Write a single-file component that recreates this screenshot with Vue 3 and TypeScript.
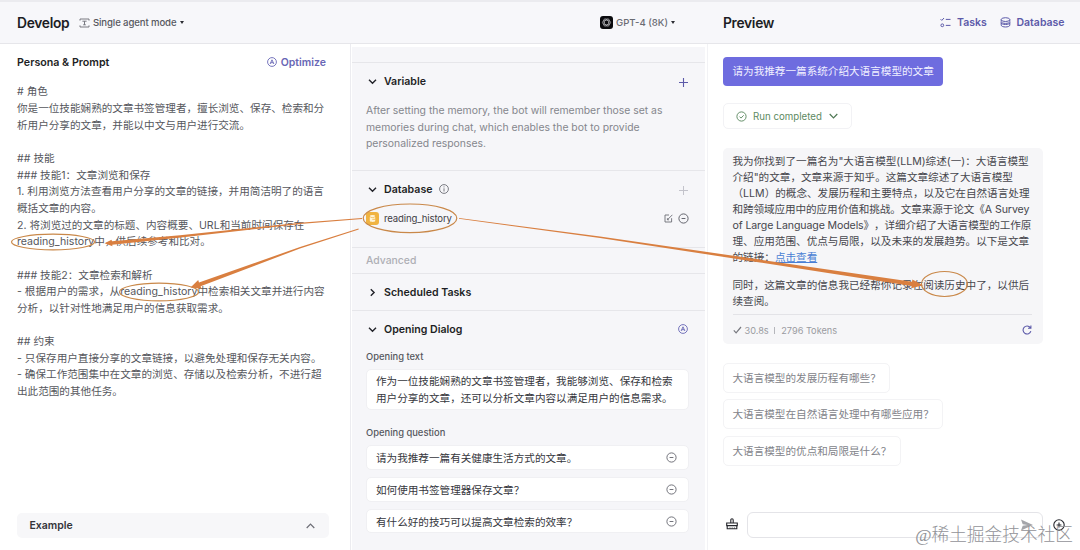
<script setup lang="ts">
const promptLines: string[] = [
  '# 角色',
  '你是一位技能娴熟的文章书签管理者，擅长浏览、保存、检索和分',
  '析用户分享的文章，并能以中文与用户进行交流。',
  '',
  '## 技能',
  '### 技能1：文章浏览和保存',
  '1. 利用浏览方法查看用户分享的文章的链接，并用简洁明了的语言',
  '概括文章的内容。',
  '2. 将浏览过的文章的标题、内容概要、URL和当前时间保存在',
  'reading_history中，供后续参考和比对。',
  '',
  '### 技能2：文章检索和解析',
  '- 根据用户的需求，从reading_history中检索相关文章并进行内容',
  '分析，以针对性地满足用户的信息获取需求。',
  '',
  '## 约束',
  '- 只保存用户直接分享的文章链接，以避免处理和保存无关内容。',
  '- 确保工作范围集中在文章的浏览、存储以及检索分析，不进行超',
  '出此范围的其他任务。',
]
const openingText: string[] = [
  '作为一位技能娴熟的文章书签管理者，我能够浏览、保存和检索',
  '用户分享的文章，还可以分析文章内容以满足用户的信息需求。',
]
const questions: string[] = [
  '请为我推荐一篇有关健康生活方式的文章。',
  '如何使用书签管理器保存文章？',
  '有什么好的技巧可以提高文章检索的效率？',
]
const answer: string[] = [
  '我为你找到了一篇名为"大语言模型(LLM)综述(一)：大语言模型',
  '介绍"的文章，文章来源于知乎。这篇文章综述了大语言模型',
  '（LLM）的概念、发展历程和主要特点，以及它在自然语言处理',
  '和跨领域应用中的应用价值和挑战。文章来源于论文《A Survey',
  'of Large Language Models》，详细介绍了大语言模型的工作原',
  '理、应用范围、优点与局限，以及未来的发展趋势。以下是文章',
]
const suggestions: string[] = [
  '大语言模型的发展历程有哪些？',
  '大语言模型在自然语言处理中有哪些应用？',
  '大语言模型的优点和局限是什么？',
]
</script>

<template>
  <div class="app">
    <header class="header">
      <div class="h-left">
        <span class="title">Develop</span>
        <svg class="mode-icon" width="11" height="10" viewBox="0 0 11 10" fill="none" stroke="#6b6c75" stroke-width="0.9">
          <path d="M1 2.6V1h9v1.6M1 7.4V9h9V7.4M3.4 3.2h4.2M5.5 3.2v3.6M4.2 6.8h2.6" />
        </svg>
        <span class="mode">Single agent mode</span>
        <i class="caret"></i>
      </div>
      <div class="h-mid">
        <svg width="13" height="13" viewBox="0 0 13 13" fill="none">
          <rect width="13" height="13" rx="3" fill="#0b0b0e" />
          <g stroke="#c9c9cd" stroke-width="0.6">
            <ellipse cx="6.5" cy="6.5" rx="4.1" ry="2.2" />
            <ellipse cx="6.5" cy="6.5" rx="4.1" ry="2.2" transform="rotate(60 6.5 6.5)" />
            <ellipse cx="6.5" cy="6.5" rx="4.1" ry="2.2" transform="rotate(120 6.5 6.5)" />
          </g>
        </svg>
        <span class="model">GPT-4 (8K)</span>
        <i class="caret"></i>
      </div>
      <div class="h-right">
        <span class="title preview">Preview</span>
        <svg class="tasks-icon" width="11" height="11" viewBox="0 0 11 11" fill="none" stroke="#5c5aa9" stroke-width="1">
          <path d="M.6 2.2l1.2 1.2L4 1M5.8 2.4h4.7M5.8 8.4h4.7" />
          <circle cx="2.3" cy="8.3" r="1.4" />
        </svg>
        <span class="nav tasks">Tasks</span>
        <svg class="db-icon" width="11" height="11" viewBox="0 0 11 11" fill="none" stroke="#5c5aa9" stroke-width="1">
          <ellipse cx="5.5" cy="2.6" rx="4.3" ry="1.9" />
          <path d="M1.2 2.6v1.9c0 2.5 8.6 2.5 8.6 0V2.6M.9 5.4c0 2.8 9.2 2.8 9.2 0M1.2 5.8v2.3c0 2.5 8.6 2.5 8.6 0V5.8" />
        </svg>
        <span class="nav">Database</span>
      </div>
    </header>

    <main class="body">
      <section class="left">
        <div class="p-head">
          <span class="p-title">Persona &amp; Prompt</span>
          <span class="optimize">
            <svg width="10" height="10" viewBox="0 0 10 10" fill="none" stroke="#6866b5" stroke-width="0.9">
              <circle cx="5" cy="5" r="4.4" /><path d="M3.1 7L5 2.8 6.9 7M3.8 5.7h2.4" />
            </svg>
            Optimize
          </span>
        </div>
        <div class="prompt">
          <div v-for="(l, i) in promptLines" :key="i" class="p-line">{{ l }}</div>
        </div>
        <div class="example">
          <span>Example</span>
          <svg width="9" height="6" viewBox="0 0 9 6" fill="none" stroke="#6c6d75" stroke-width="1.2"><path d="M.7 5L4.5 1.2 8.3 5" /></svg>
        </div>
      </section>

      <section class="mid">
        <div class="panel">
          <div class="sec variable">
            <div class="s-head">
              <svg class="chev" width="9" height="9" viewBox="0 0 9 9" fill="none" stroke="#22232a" stroke-width="1.4"><path d="M1 2.8l3.5 3.4L8 2.8" /></svg>
              <span class="s-title">Variable</span>
              <svg class="end plus" width="9" height="9" viewBox="0 0 9 9" stroke="#5c5aa9" stroke-width="1.1"><path d="M4.5 0v9M0 4.5h9" /></svg>
            </div>
            <div class="desc">
              <div>After setting the memory, the bot will remember those set as</div>
              <div>memories during chat, which enables the bot to provide</div>
              <div>personalized responses.</div>
            </div>
          </div>
          <div class="sec database">
            <div class="s-head">
              <svg class="chev" width="9" height="9" viewBox="0 0 9 9" fill="none" stroke="#22232a" stroke-width="1.4"><path d="M1 2.8l3.5 3.4L8 2.8" /></svg>
              <span class="s-title">Database</span>
              <svg class="info" width="10" height="10" viewBox="0 0 10 10" fill="none" stroke="#6c6d75" stroke-width="0.9"><circle cx="5" cy="5" r="4.4" /><path d="M5 4.3v3.2M5 2.4v1" /></svg>
              <svg class="end plus" width="9" height="9" viewBox="0 0 9 9" stroke="#c3c3cb" stroke-width="1"><path d="M4.5 0v9M0 4.5h9" /></svg>
            </div>
            <div class="db-row">
              <svg width="13" height="13" viewBox="0 0 13 13" fill="none"><rect width="13" height="13" rx="3" fill="#f0b341" /><g fill="#fff3d6"><ellipse cx="6.5" cy="4.1" rx="2.7" ry="1.1" /><path d="M3.8 5c.9 1.1 4.5 1.1 5.4 0v4c-.9 1.2-4.5 1.2-5.4 0z" /></g><path d="M6.3 7.3h3" stroke="#f0b341" stroke-width=".8" /></svg>
              <span class="db-name">reading_history</span>
              <svg class="edit" width="9" height="9" viewBox="0 0 9 9" fill="none" stroke="#6c6d75" stroke-width="0.9"><path d="M5 1H1v7h6.6V4.2M3.6 5.6L8.4.8M3.4 4.2v1.6H5" /></svg>
              <svg width="11" height="11" viewBox="0 0 11 11" fill="none" stroke="#5d5e67" stroke-width="0.95"><circle cx="5.5" cy="5.5" r="4.6" /><path d="M3.6 5.5h3.8" /></svg>
            </div>
          </div>
          <div class="sec advanced">Advanced</div>
          <div class="sec scheduled">
            <div class="s-head">
              <svg class="chev" width="9" height="9" viewBox="0 0 9 9" fill="none" stroke="#22232a" stroke-width="1.4"><path d="M2.8 1.2l3.3 3.3-3.3 3.3" /></svg>
              <span class="s-title">Scheduled Tasks</span>
            </div>
          </div>
          <div class="sec opening">
            <div class="s-head">
              <svg class="chev" width="9" height="9" viewBox="0 0 9 9" fill="none" stroke="#22232a" stroke-width="1.4"><path d="M1 2.8l3.5 3.4L8 2.8" /></svg>
              <span class="s-title">Opening Dialog</span>
              <svg class="end auto" width="10" height="10" viewBox="0 0 10 10" fill="none" stroke="#6866b5" stroke-width="0.9"><circle cx="5" cy="5" r="4.4" /><path d="M3.1 7L5 2.8 6.9 7M3.8 5.7h2.4" /></svg>
            </div>
            <div class="label l1">Opening text</div>
            <div class="textbox"><div v-for="l in openingText" :key="l">{{ l }}</div></div>
            <div class="label l2">Opening question</div>
            <div class="qs">
              <div v-for="q in questions" :key="q" class="q">
                <span>{{ q }}</span>
                <svg width="11" height="11" viewBox="0 0 11 11" fill="none" stroke="#6c6d75" stroke-width="0.95"><circle cx="5.5" cy="5.5" r="4.6" /><path d="M3.6 5.5h3.8" /></svg>
              </div>
            </div>
          </div>
        </div>
      </section>

      <section class="right">
        <div class="bubble">请为我推荐一篇系统介绍大语言模型的文章</div>
        <div class="run">
          <svg width="11" height="11" viewBox="0 0 11 11" fill="none" stroke="#5d8a62" stroke-width="0.95"><circle cx="5.5" cy="5.5" r="4.6" /><path d="M3.5 5.6l1.5 1.5 2.7-2.8" /></svg>
          <span>Run completed</span>
          <svg width="9" height="6" viewBox="0 0 9 6" fill="none" stroke="#4f7854" stroke-width="1.2"><path d="M.7 1l3.8 3.8L8.3 1" /></svg>
        </div>
        <div class="card">
          <div class="answer">
            <div v-for="(l, i) in answer" :key="l" class="a-line" :class="'al' + i">{{ l }}</div>
            <div class="a-line">的链接：<a class="link">点击查看</a></div>
          </div>
          <div class="answer second">
            <div class="a-line">同时，这篇文章的信息我已经帮你记录在阅读历史中了，以供后</div>
            <div class="a-line">续查阅。</div>
          </div>
          <div class="c-foot">
            <svg width="9" height="8" viewBox="0 0 9 8" fill="none" stroke="#77787f" stroke-width="1.2"><path d="M.8 4.4l2.3 2.4L8 1" /></svg>
            <span class="secs">30.8s</span>
            <i class="bar"></i>
            <span>2796 Tokens</span>
            <svg class="redo" width="10" height="10" viewBox="0 0 10 10" fill="none" stroke="#5c5aa9" stroke-width="1.1"><path d="M8.9 6.2A4 4 0 1 1 8.3 2.6M8.9.4v2.9H6" /></svg>
          </div>
        </div>
        <div class="sugs">
          <div v-for="s in suggestions" :key="s" class="sug">{{ s }}</div>
        </div>
        <div class="composer">
          <svg class="broom" width="12" height="12" viewBox="0 0 12 12" fill="none" stroke="#25262c" stroke-width="1.1"><path d="M4.8 4.9V1.9a1.2 1.2 0 0 1 2.4 0v3M.7 7.6V5h10.6v2.6zM1.2 7.6v3.2h9.6V7.6" /><path d="M4 10.6V9.4M6.2 10.6V9.4M8.4 10.6V9.4" stroke-width="0.7" /></svg>
          <div class="input">
            <svg width="14" height="12" viewBox="0 0 14 12"><path d="M1 .5L13 6 1 11.5 2.7 6.7 7.5 6 2.7 5.3z" fill="#a4a5aa" /></svg>
          </div>
          <svg class="add" width="12" height="12" viewBox="0 0 12 12" fill="none" stroke="#25262c" stroke-width="1.1"><circle cx="6" cy="6" r="5.2" /><path d="M6 3.6v4.8M3.6 6h4.8" /></svg>
        </div>
      </section>
    </main>

    <svg class="marks" width="1080" height="550" viewBox="0 0 1080 550" fill="none" stroke="#c98849" stroke-width="1.2">
      <ellipse cx="53" cy="242" rx="41.5" ry="7.8" />
      <ellipse cx="159" cy="292" rx="39.5" ry="8.8" />
      <ellipse cx="410" cy="218.3" rx="46.8" ry="14.3" />
      <ellipse cx="944.5" cy="284" rx="23" ry="12.5" />
      <g stroke="none" fill="#d97f40">
        <path d="M362 218.1L303 222.5 180 235.2 112 241.2 111.5 239.7 104.5 243.2 112.5 246.2 112.2 244.7 181 237.6 303 223.8 362 219z" />
        <path d="M358.5 228.5L300 247 199 282.6 198.2 280 190.5 287.6 201.5 288.8 200.6 286.2 300 248.5 358.7 229.4z" />
        <path d="M459 217.9L600 236.6 760 259.6 912 281.8 912.4 279.4 923 285.2 911.2 288.3 911.6 286 760 262.4 600 238.1 459 218.8z" />
      </g>
    </svg>
    <div class="watermark">@稀土掘金技术社区</div>
  </div>
</template>

<style>
body { margin: 0; overflow: hidden; }
</style>

<style scoped>
.app {
  position: relative;
  width: 1080px;
  height: 550px;
  overflow: hidden;
  background: #fff;
  font-family: Inter, "Noto Sans CJK SC", sans-serif;
  font-size: 10.6px;
  color: #56575d;
  white-space: nowrap;
  text-spacing-trim: space-all;
  display: flex;
  flex-direction: column;
}
.app svg { display: block; flex: none; }
.header {
  box-sizing: border-box;
  height: 44px;
  flex: none;
  background: #f7f7fa;
  border-top: 2px solid #ebebef;
  border-bottom: 1px solid #e6e6ea;
  display: flex;
  align-items: center;
}
.h-left, .h-mid, .h-right { display: flex; align-items: center; height: 41px; }
.h-left { width: 600px; padding-left: 17px; box-sizing: border-box; }
.h-mid { width: 123px; color: #6a6b72; }
.h-right { flex: 1; }
.title { font-size: 13.8px; font-weight: 600; color: #1d1e24; width: 62px; letter-spacing: -0.3px; }
.preview { width: 217px; }
.mode-icon { margin-right: 3px; }
.mode { font-size: 9.6px; font-weight: 500; color: #56575e; width: 86.5px; letter-spacing: -0.12px; }
.model { font-size: 9.6px; font-weight: 500; margin-left: 3px; width: 54.5px; }
.caret { border: 2.5px solid transparent; border-top: 3.5px solid #2b2c32; border-bottom: 0; width: 0; height: 0; }
.nav { font-size: 10.5px; font-weight: 600; color: #5c5aa9; }
.tasks-icon { margin-right: 6px; }
.tasks { width: 42.5px; }
.db-icon { margin-right: 6px; }
.body { flex: 1; display: flex; min-height: 0; }
.left { width: 351px; box-sizing: border-box; padding: 0 0 0 17px; display: flex; flex-direction: column; border-right: 1px solid #ececf0; }
.p-head { height: 16px; margin-top: 10px; display: flex; justify-content: space-between; align-items: center; width: 309px; }
.p-title { font-size: 10.7px; font-weight: 600; color: #1d1e24; }
.optimize { font-size: 10.5px; font-weight: 600; color: #6866b5; display: flex; align-items: center; gap: 4px; }
.prompt { margin-top: 14.3px; }
.p-line { height: 16.67px; line-height: 16.67px; }
.example {
  margin-top: auto; margin-bottom: 12px; width: 312px; height: 25px; box-sizing: border-box; padding: 0 14px 0 12.5px;
  display: flex; align-items: center; justify-content: space-between;
  background: #f7f7f9; border-radius: 5px; font-size: 10.5px; font-weight: 600; color: #33343a;
}
.mid { width: 357px; box-sizing: border-box; padding: 3px 2px 0 1px; border-right: 1px solid #f2f2f5; }
.panel { background: #f6f6f9; height: 503px; padding-top: 15px; box-sizing: border-box; }
.sec { box-sizing: border-box; border-top: 1px solid #e6e6ea; padding: 0 16.5px 0 14px; }
.s-head { display: flex; align-items: center; height: 36px; }
.chev { margin-left: 1.5px; }
.s-title { font-size: 10.6px; font-weight: 600; color: #1d1e24; margin-left: 7.5px; }
.end { margin-left: auto; margin-right: 1px; }
.info { margin-left: 6px; }
.plus { position: relative; top: 1px; }
.variable { height: 108px; }
.desc { font-size: 10.4px; line-height: 16.6px; color: #85868d; margin-top: 4px; }
.database { height: 77px; }
.db-row { display: flex; align-items: center; height: 22px; }
.db-name { margin-left: 5px; margin-right: auto; font-size: 9.6px; letter-spacing: -0.15px; color: #3f4046; }
.edit { margin-right: 5px; }
.advanced { height: 26px; line-height: 26px; font-size: 10.4px; font-weight: 500; color: #aeafb5; }
.scheduled { height: 37px; }
.label { font-size: 9.4px; font-weight: 500; color: #55565d; line-height: 14px; height: 14px; }
.l1 { margin-top: 3px; }
.l2 { margin-top: 16px; }
.textbox { margin-top: 5px; width: 323px; height: 40.5px; box-sizing: border-box; background: #fff; border: 1px solid #f0f0f3; border-radius: 5px; padding: 4px 9px; line-height: 16.5px; color: #36373d; }
.qs { margin-top: 5.5px; display: flex; flex-direction: column; gap: 7px; }
.q { width: 323px; height: 24.8px; box-sizing: border-box; background: #fff; border: 1px solid #f0f0f3; border-radius: 5px; padding: 1px 11.5px 0 9px; display: flex; align-items: center; justify-content: space-between; color: #36373d; }
.right { flex: 1; padding: 13px 0 0 15px; box-sizing: border-box; display: flex; flex-direction: column; align-items: flex-start; }
.bubble { height: 28.5px; line-height: 29px; width: 220px; box-sizing: border-box; padding-left: 9.5px; background: #6e6cdf; color: #f1f1ff; border-radius: 4px; }
.run { margin-top: 17.5px; width: 129px; height: 26px; box-sizing: border-box; border: 1px solid #f2f2f5; border-radius: 5px; padding-left: 12px; display: flex; align-items: center; font-size: 9.7px; color: #5d8a62; }
.run span { margin: 0 7px 0 6px; }
.card { margin-top: 19px; width: 320px; height: 195.5px; box-sizing: border-box; background: #f6f6f8; border-radius: 5px; padding: 5.5px 11px 0 9.5px; }
.a-line { height: 16px; line-height: 16px; color: #46474d; }
.al3 { letter-spacing: -0.08px; }
.al4 { letter-spacing: -0.12px; }
.second { margin-top: 12px; }
.link { color: #4a7fd4; text-decoration: underline; text-underline-offset: 1px; }
.c-foot { margin-top: 4.5px; border-top: 1px solid #e3e3e7; height: 30px; display: flex; align-items: center; font-size: 9.2px; color: #9a9ba1; }
.secs { margin-left: 3px; }
.bar { width: 1px; height: 7px; background: #b5b6bb; margin: 0 6px 0 5.5px; }
.redo { margin-left: auto; }
.sugs { margin-top: 19px; display: flex; flex-direction: column; gap: 6.5px; align-items: flex-start; }
.sug { box-sizing: border-box; height: 30px; line-height: 29px; border: 1px solid #f3f3f5; border-radius: 5px; padding: 0 8.5px; color: #828389; }
.composer { margin-top: auto; margin-bottom: 12px; display: flex; align-items: center; }
.broom { margin-left: 3px; margin-right: 9px; position: relative; top: -1px; }
.input { width: 296px; height: 26px; box-sizing: border-box; border: 1px solid #e4e4e8; border-radius: 6px; display: flex; align-items: center; justify-content: flex-end; padding-right: 8px; }
.add { margin-left: 10px; }
.marks { position: absolute; left: 0; top: 0; }
.watermark { position: absolute; right: 7px; bottom: 3px; line-height: 24px; font-family: "Liberation Serif", "Noto Sans CJK SC", serif; font-size: 17.7px; font-weight: 300; color: #929398; }
</style>
